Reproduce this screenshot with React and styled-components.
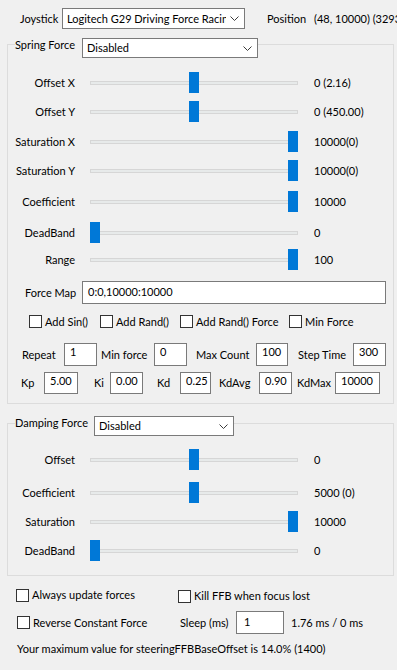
import React from "react";
import styled, { createGlobalStyle } from "styled-components";

const Global = createGlobalStyle`
  html, body { margin: 0; padding: 0; background: #f0f0f0; overflow: hidden; }
  body { font-family: Lato, "Liberation Sans", sans-serif; font-size: 11px; color: #000; }
`;

const Window = styled.div`
  width: 397px;
  height: 670px;
  overflow: hidden;
  background: #f0f0f0;
  display: flex;
  flex-direction: column;
`;

const TopBar = styled.div`
  display: flex;
  align-items: center;
  height: 21px;
  margin-top: 8px;
  padding-left: 20px;
  white-space: nowrap;
`;

const Text = styled.span`
  display: block;
  flex: none;
  width: ${(p) => (p.$w ? `${p.$w}px` : "auto")};
  margin-left: ${(p) => p.$ml || 0}px;
  line-height: ${(p) => p.$lh || 14}px;
  white-space: nowrap;
`;

const Combo = styled.div`
  flex: none;
  box-sizing: border-box;
  width: ${(p) => p.$w}px;
  height: ${(p) => p.$h || 20}px;
  background: #fff;
  border: 1px solid #7a7a7a;
  display: flex;
  align-items: center;
  padding: 0 5px 0 4px;
  white-space: nowrap;
  overflow: hidden;
`;

const ComboText = styled.span`
  flex: 1;
  overflow: hidden;
  line-height: 14px;
`;

const Chevron = () => (
  <svg width="9" height="5" viewBox="0 0 9 5" style={{ flex: "none", marginLeft: 4 }}>
    <polyline points="0.5,0.5 4.5,4.5 8.5,0.5" fill="none" stroke="#3c3c3c" strokeWidth="1" />
  </svg>
);

const Group = styled.section`
  box-sizing: border-box;
  width: 387px;
  margin-left: 7px;
  margin-top: ${(p) => p.$mt}px;
  border: 1px solid #dcdcdc;
  padding-bottom: ${(p) => p.$pb}px;
  display: flex;
  flex-direction: column;
`;

const GroupHeader = styled.div`
  display: flex;
  align-items: flex-start;
  align-self: flex-start;
  height: 20px;
  margin: ${(p) => p.$mt}px 0 0 7px;
  background: #f0f0f0;
`;

const SliderRow = styled.div`
  display: flex;
  align-items: center;
  height: 21px;
  margin-top: ${(p) => p.$mt}px;
`;

const SliderLabel = styled.span`
  flex: none;
  width: 67px;
  text-align: right;
  line-height: 14px;
  white-space: nowrap;
`;

const Track = styled.div`
  position: relative;
  flex: none;
  width: 208px;
  height: 21px;
  margin-left: 15px;
  display: flex;
  align-items: center;
`;

const TrackLine = styled.div`
  box-sizing: border-box;
  width: 100%;
  height: 4px;
  background: #e7eaea;
  border: 1px solid #d6d6d6;
`;

const Thumb = styled.div`
  position: absolute;
  top: 0;
  width: 10px;
  height: 21px;
  background: #0078d7;
`;

const SliderValue = styled.span`
  margin-left: 16px;
  line-height: 14px;
  white-space: nowrap;
`;

const Row = styled.div`
  display: flex;
  align-items: ${(p) => p.$align || "center"};
  height: ${(p) => (p.$h ? `${p.$h}px` : "auto")};
  margin-top: ${(p) => p.$mt || 0}px;
  padding-left: ${(p) => p.$pl || 0}px;
`;

const Field = styled.div`
  flex: none;
  box-sizing: border-box;
  width: ${(p) => p.$w}px;
  height: ${(p) => p.$h || 23}px;
  background: #fff;
  border: 1px solid #7a7a7a;
  padding: ${(p) => p.$pt || 0}px 0 0 ${(p) => p.$pl || 5}px;
  line-height: 16px;
  white-space: nowrap;
  overflow: hidden;
`;

const Check = styled.label`
  flex: none;
  display: flex;
  align-items: center;
  width: ${(p) => (p.$w ? `${p.$w}px` : "auto")};
  margin-left: ${(p) => p.$ml || 0}px;
  margin-top: ${(p) => p.$mt || 0}px;
  line-height: 14px;
  white-space: nowrap;
`;

const Box = styled.span`
  flex: none;
  box-sizing: border-box;
  width: 13px;
  height: 13px;
  margin-right: 3px;
  background: #fff;
  border: 1px solid #333;
`;

const Footer = styled.div`
  display: flex;
  flex-direction: column;
  padding-left: 16px;
`;

function Slider({ label, value, pos, mt }) {
  return (
    <SliderRow $mt={mt}>
      <SliderLabel>{label}</SliderLabel>
      <Track>
        <TrackLine />
        <Thumb style={{ left: Math.round(pos * 198) }} />
      </Track>
      <SliderValue>{value}</SliderValue>
    </SliderRow>
  );
}

const springSliders = [
  { label: "Offset X", value: "0 (2.16)", pos: 0.5, mt: 14 },
  { label: "Offset Y", value: "0 (450.00)", pos: 0.5, mt: 8 },
  { label: "Saturation X", value: "10000(0)", pos: 1, mt: 9 },
  { label: "Saturation Y", value: "10000(0)", pos: 1, mt: 8 },
  { label: "Coefficient", value: "10000", pos: 1, mt: 10 },
  { label: "DeadBand", value: "0", pos: 0, mt: 10 },
  { label: "Range", value: "100", pos: 1, mt: 6 },
];

const dampingSliders = [
  { label: "Offset", value: "0", pos: 0.5, mt: 13 },
  { label: "Coefficient", value: "5000 (0)", pos: 0.5, mt: 12 },
  { label: "Saturation", value: "10000", pos: 1, mt: 8 },
  { label: "DeadBand", value: "0", pos: 0, mt: 8 },
];

const paramsRow1 = [
  { label: "Repeat", ml: 14, w: 42, val: "1", fw: 33 },
  { label: "Min force", ml: 4, w: 53, val: "0", fw: 33 },
  { label: "Max Count", ml: 9, w: 60, val: "100", fw: 32 },
  { label: "Step Time", ml: 10, w: 55, val: "300", fw: 33 },
];

const paramsRow2 = [
  { label: "Kp", ml: 13, w: 23, val: "5.00", fw: 34 },
  { label: "Ki", ml: 16, w: 16, val: "0.00", fw: 33 },
  { label: "Kd", ml: 14, w: 23, val: "0.25", fw: 31 },
  { label: "KdAvg", ml: 8, w: 40, val: "0.90", fw: 33 },
  { label: "KdMax", ml: 5, w: 38, val: "10000", fw: 45 },
];

const checks = [
  { label: "Add Sin()", w: 71 },
  { label: "Add Rand()", w: 80 },
  { label: "Add Rand() Force", w: 109 },
  { label: "Min Force" },
];

export default function App() {
  return (
    <Window>
      <Global />
      <TopBar>
        <Text $w={42}>Joystick</Text>
        <Combo $w={183} $h={21}>
          <ComboText>Logitech G29 Driving Force Racing Wheel</ComboText>
          <Chevron />
        </Combo>
        <Text $ml={22} $w={47}>Position</Text>
        <Text>(48, 10000) (32939, 32768)</Text>
      </TopBar>

      <Group $mt={15} $pb={9}>
        <GroupHeader $mt={-7}>
          <Text $w={67}>Spring Force</Text>
          <Combo $w={176}>
            <ComboText>Disabled</ComboText>
            <Chevron />
          </Combo>
        </GroupHeader>
        {springSliders.map((s) => (
          <Slider key={s.label} {...s} />
        ))}
        <Row $mt={11} $pl={17}>
          <Text $w={57}>Force Map</Text>
          <Field $w={304} $pt={2}>0:0,10000:10000</Field>
        </Row>
        <Row $mt={10} $pl={21} $h={15}>
          {checks.map((c) => (
            <Check key={c.label} $w={c.w}>
              <Box />
              {c.label}
            </Check>
          ))}
        </Row>
        <Row $mt={14}>
          {paramsRow1.map((p) => (
            <React.Fragment key={p.label}>
              <Text $ml={p.ml} $w={p.w}>{p.label}</Text>
              <Field $w={p.fw} $h={23}>{p.val}</Field>
            </React.Fragment>
          ))}
        </Row>
        <Row $mt={6}>
          {paramsRow2.map((p) => (
            <React.Fragment key={p.label}>
              <Text $ml={p.ml} $w={p.w}>{p.label}</Text>
              <Field $w={p.fw} $h={22}>{p.val}</Field>
            </React.Fragment>
          ))}
        </Row>
      </Group>

      <Group $mt={19} $pb={14}>
        <GroupHeader $mt={-8}>
          <Text $w={79}>Damping Force</Text>
          <Combo $w={140}>
            <ComboText>Disabled</ComboText>
            <Chevron />
          </Combo>
        </GroupHeader>
        {dampingSliders.map((s) => (
          <Slider key={s.label} {...s} />
        ))}
      </Group>

      <Footer>
        <Row $mt={12} $align="flex-start">
          <Check $w={162}>
            <Box />
            Always update forces
          </Check>
          <Check $mt={1}>
            <Box />
            Kill FFB when focus lost
          </Check>
        </Row>
        <Row $mt={8} $h={23}>
          <Check $w={163} $ml={1}>
            <Box />
            Reverse Constant Force
          </Check>
          <Text $w={56}>Sleep (ms)</Text>
          <Field $w={48} $h={23} $pl={7} $pt={2}>1</Field>
          <Text $ml={7}>1.76 ms / 0 ms</Text>
        </Row>
        <Row $mt={7} $pl={1}>
          <Text $lh={16}>Your maximum value for steeringFFBBaseOffset is 14.0% (1400)</Text>
        </Row>
      </Footer>
    </Window>
  );
}
